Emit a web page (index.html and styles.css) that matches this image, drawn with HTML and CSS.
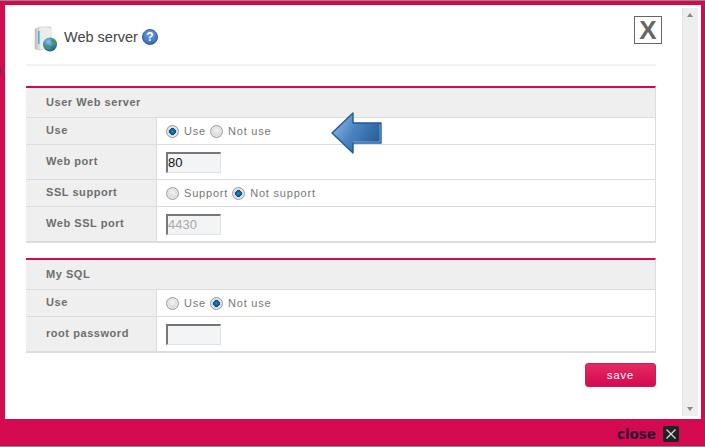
FILE: index.html
```html
<!DOCTYPE html>
<html lang="en">
<head>
  <meta charset="UTF-8" />
  <title>Web server</title>
  <link rel="stylesheet" href="styles.css">
</head>
<body>

<div class="frame">
  <span class="edge-mark"></span>
  <div class="inner">
    <div class="content">

      <!-- Title -->
      <div class="head">
        <svg class="server-icon" width="24" height="26" viewBox="0 0 24 26">
          <defs>
            <linearGradient id="box" x1="0" y1="0" x2="1" y2="0">
              <stop offset="0" stop-color="#bdbdb8"/>
              <stop offset="0.45" stop-color="#f4f4f2"/>
              <stop offset="1" stop-color="#dcdcd8"/>
            </linearGradient>
            <radialGradient id="globe" cx="0.4" cy="0.3" r="0.8">
              <stop offset="0" stop-color="#8fc4ea"/>
              <stop offset="0.6" stop-color="#2f78b8"/>
              <stop offset="1" stop-color="#1d5a8c"/>
            </radialGradient>
          </defs>
          <path d="M1 3 L6 1 H17 V21 L6 24 L1 23 Z" fill="url(#box)" stroke="#c4c4c0" stroke-width="0.6"/>
          <rect x="4" y="5" width="1.6" height="13" fill="#4fb3e0"/>
          <path d="M7 2 H17 V12 L7 20 Z" fill="#ececea"/>
          <circle cx="16" cy="18.5" r="7" fill="url(#globe)"/>
          <path d="M11 21 C12 17 15 19 16 21 C17 24 13 25 11 21 Z M17 14 C20 13 22 16 22.5 19 C20 20 18 18 17 14 Z" fill="#4f9a3c"/>
        </svg>
        <span class="head-title">Web server</span>
        <span class="help">?</span>
      </div>

      <!-- User Web server -->
      <div class="panel">
        <div class="panel-title">User Web server</div>
        <div class="row short">
          <div class="label">Use</div>
          <div class="value">
            <span class="radio on"></span><span class="opt">Use</span>
            <span class="radio"></span><span class="opt">Not use</span>
          </div>
        </div>
        <div class="row tall">
          <div class="label">Web port</div>
          <div class="value"><input class="field" type="text" value="80"></div>
        </div>
        <div class="row short">
          <div class="label">SSL support</div>
          <div class="value">
            <span class="radio"></span><span class="opt">Support</span>
            <span class="radio on"></span><span class="opt">Not support</span>
          </div>
        </div>
        <div class="row tall last">
          <div class="label">Web SSL port</div>
          <div class="value"><input class="field off" type="text" value="4430" disabled></div>
        </div>
      </div>

      <!-- My SQL -->
      <div class="panel">
        <div class="panel-title">My SQL</div>
        <div class="row short">
          <div class="label">Use</div>
          <div class="value">
            <span class="radio"></span><span class="opt">Use</span>
            <span class="radio on"></span><span class="opt">Not use</span>
          </div>
        </div>
        <div class="row tall last">
          <div class="label">root password</div>
          <div class="value"><input class="field" type="text"></div>
        </div>
      </div>

      <div class="actions">
        <button class="save">save</button>
      </div>
    </div>

    <div class="scrollbar">
      <span class="arrow-up"></span>
      <span class="arrow-down"></span>
    </div>

    <!-- overlays -->
    <div class="x-btn">X</div>
    <svg class="big-arrow" width="52" height="44" viewBox="0 0 52 44">
      <defs>
        <linearGradient id="arrowFill" x1="0" y1="0" x2="1" y2="0.5">
          <stop offset="0" stop-color="#9cc2e8"/>
          <stop offset="0.5" stop-color="#4c86c2"/>
          <stop offset="1" stop-color="#2a619f"/>
        </linearGradient>
      </defs>
      <path d="M1 22 L22 2 V12 H50 V32 H22 V42 Z" fill="url(#arrowFill)" stroke="#1c5a9a" stroke-width="1.4" stroke-linejoin="round"/>
      <path d="M49 13 V31 H22" fill="none" stroke="#8db8e2" stroke-width="0.8"/>
    </svg>
  </div>

  <div class="foot">
    <span class="foot-close">close</span>
    <span class="foot-x">
      <svg width="10" height="10" viewBox="0 0 10 10"><path d="M0.5 0.5 L9.5 9.5 M9.5 0.5 L0.5 9.5" stroke="#d8d8d8" stroke-width="1.3"/></svg>
    </span>
  </div>
</div>

</body>
</html>
```

FILE: styles.css
```css
* { box-sizing: border-box; margin: 0; padding: 0; }
html, body { height: 100%; overflow: hidden; }
body { font-family: "Liberation Sans", Arial, sans-serif; background: #fff; }

.frame {
  position: relative;
  width: 705px;
  height: 447px;
  display: flex;
  flex-direction: column;
  background: #d40a50;
  border-top: 1px solid #8a8a8a;
  border-bottom: 1px solid #8a8a8a;
  padding: 4px 4px 0 5px;
}

.edge-mark {
  position: absolute;
  left: 0;
  top: 67px;
  width: 1px;
  height: 6px;
  background: #444;
}

.inner {
  position: relative;
  flex: 1;
  display: flex;
  background: #fff;
  padding: 3px 3px 3px 21px;
  min-height: 0;
}

.content { width: 630px; margin-right: 26px; }

.head {
  height: 58px;
  border-bottom: 2px solid #f2f2f2;
  display: flex;
  align-items: center;
  padding: 1px 0 0 8px;
}

.server-icon { margin: 4px 6px 0 0; }

.head-title { font-size: 14.5px; color: #444; }

.help {
  width: 16px;
  height: 16px;
  margin-left: 4px;
  border-radius: 50%;
  background: radial-gradient(circle at 50% 30%, #6fa3e6, #2a5fb4);
  border: 1px solid #2a5aa0;
  color: #fff;
  font-size: 12px;
  font-weight: bold;
  line-height: 14px;
  text-align: center;
}

.panel {
  margin-top: 20px;
  border-top: 2px solid #d40a50;
  border-right: 1px solid #ddd;
}
.panel + .panel { margin-top: 15px; }

.panel-title {
  height: 30px;
  line-height: 28px;
  padding-left: 20px;
  background: #efefef;
  border-bottom: 1px solid #dcdcdc;
  font-size: 11px;
  font-weight: bold;
  letter-spacing: 0.55px;
  color: #6e6e6e;
}

.row {
  display: flex;
  border-bottom: 1px solid #d9dce0;
}
.row.short { height: 27px; }
.row.tall { height: 35px; }
.row.last { border-bottom: 2px solid #d9dce0; height: 36px; }

.label {
  width: 131px;
  padding: 6px 0 0 20px;
  background: #efefef;
  border-right: 1px solid #dcdcdc;
  font-size: 11px;
  font-weight: bold;
  letter-spacing: 0.55px;
  color: #6e6e6e;
}
.tall .label { padding-top: 10px; }

.value {
  flex: 1;
  display: flex;
  align-items: center;
  padding-left: 9px;
  font-size: 11px;
  letter-spacing: 0.8px;
  color: #777;
}

.radio {
  width: 13px;
  height: 13px;
  border-radius: 50%;
  border: 1px solid #9a9a9a;
  box-shadow: inset 0 0 0 1px #e8e8e8;
  background: radial-gradient(circle at 50% 40%, #f2f2f2, #cbcbcb);
  margin-right: 5px;
}
.radio.on {
  background: radial-gradient(circle at 50% 50%, #1a8ccc 0, #0a4f86 3.2px, #dcdcdc 3.6px, #c8c8c8 100%);
}
.opt { margin-right: 4px; }

.field {
  width: 55px;
  height: 21px;
  border: 1px solid #e0e2e4;
  border-top: 2px solid #777;
  border-left: 2px solid #777;
  background: #f3f4f6;
  font-family: "Liberation Sans", Arial, sans-serif;
  font-size: 13px;
  color: #111;
  padding-left: 0;
}
.field.off { color: #aaa; }

.actions {
  display: flex;
  justify-content: flex-end;
  padding-top: 10px;
}

.save {
  width: 71px;
  height: 24px;
  border: 1px solid #c9204f;
  border-radius: 3px;
  background: linear-gradient(#e62a63, #d40a50);
  color: #fff;
  font-family: "Liberation Sans", Arial, sans-serif;
  font-size: 11px;
  letter-spacing: 1px;
}

.scrollbar {
  position: relative;
  width: 16px;
  background: #eeeeee;
  border-left: 1px solid #e4e4e4;
}
.arrow-up, .arrow-down {
  position: absolute;
  left: 4px;
  width: 0;
  height: 0;
  border-left: 3.5px solid transparent;
  border-right: 3.5px solid transparent;
}
.arrow-up { top: 5px; border-bottom: 4px solid #888; }
.arrow-down { bottom: 5px; border-top: 4px solid #888; }

.x-btn {
  position: absolute;
  top: 11px;
  left: 629px;
  width: 28px;
  height: 28px;
  border: 1px solid #666;
  color: #666;
  font-size: 26px;
  font-weight: bold;
  line-height: 26px;
  text-align: center;
}

.big-arrow {
  position: absolute;
  left: 326px;
  top: 106px;
}

.foot {
  height: 27px;
  flex: none;
  display: flex;
  align-items: flex-end;
  justify-content: flex-end;
  padding: 0 22px 4px 0;
}

.foot-close {
  font-family: "DejaVu Sans", sans-serif;
  font-size: 13.5px;
  font-weight: bold;
  line-height: 16px;
  color: #2e1230;
  margin-right: 7px;
}

.foot-x {
  width: 16px;
  height: 16px;
  background: #222;
  border-radius: 2px;
  display: flex;
  align-items: center;
  justify-content: center;
}
```
